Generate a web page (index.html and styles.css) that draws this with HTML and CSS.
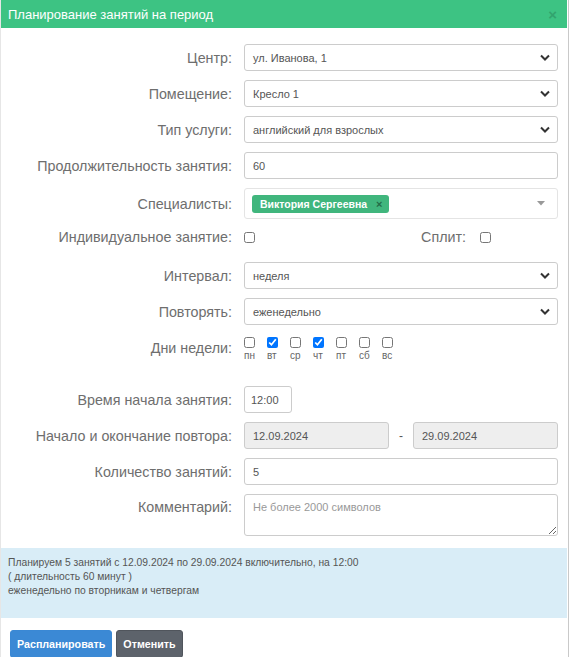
FILE: index.html
```html
<html>
<head>
	<title>Планирование занятий на период</title>
	<meta charset="utf-8">
	<link rel="stylesheet" href="styles.css">
</head>
<body>

<div class="modal">
	<div class="modal-header">
		<span>Планирование занятий на период</span>
		<span class="close">&times;</span>
	</div>

	<div class="modal-body">
		<div class="row">
			<label class="row-label">Центр:</label>
			<div class="select">
				<span>ул. Иванова, 1</span>
				<svg class="chevron" width="10" height="7" viewBox="0 0 10 7"><path d="M1 1.5 L5 5.5 L9 1.5" fill="none" stroke="#333" stroke-width="2"/></svg>
			</div>
		</div>
		<div class="row">
			<label class="row-label">Помещение:</label>
			<div class="select">
				<span>Кресло 1</span>
				<svg class="chevron" width="10" height="7" viewBox="0 0 10 7"><path d="M1 1.5 L5 5.5 L9 1.5" fill="none" stroke="#333" stroke-width="2"/></svg>
			</div>
		</div>
		<div class="row">
			<label class="row-label">Тип услуги:</label>
			<div class="select">
				<span>английский для взрослых</span>
				<svg class="chevron" width="10" height="7" viewBox="0 0 10 7"><path d="M1 1.5 L5 5.5 L9 1.5" fill="none" stroke="#333" stroke-width="2"/></svg>
			</div>
		</div>
		<div class="row">
			<label class="row-label">Продолжительность занятия:</label>
			<input class="input" type="text" value="60">
		</div>
		<div class="row">
			<label class="row-label">Специалисты:</label>
			<div class="multi">
				<span class="tag">Виктория Сергеевна <span class="tag-x">&times;</span></span>
				<svg width="8" height="5" viewBox="0 0 8 5"><path d="M0 0 L8 0 L4 4.5 Z" fill="#999"/></svg>
			</div>
		</div>
		<div class="row row-check">
			<label class="row-label">Индивидуальное занятие:</label>
			<div class="check-line">
				<input type="checkbox" class="cb">
				<span class="split">
					<span class="split-label">Сплит:</span>
					<input type="checkbox" class="cb">
				</span>
			</div>
		</div>
		<div class="row">
			<label class="row-label">Интервал:</label>
			<div class="select">
				<span>неделя</span>
				<svg class="chevron" width="10" height="7" viewBox="0 0 10 7"><path d="M1 1.5 L5 5.5 L9 1.5" fill="none" stroke="#333" stroke-width="2"/></svg>
			</div>
		</div>
		<div class="row">
			<label class="row-label">Повторять:</label>
			<div class="select">
				<span>еженедельно</span>
				<svg class="chevron" width="10" height="7" viewBox="0 0 10 7"><path d="M1 1.5 L5 5.5 L9 1.5" fill="none" stroke="#333" stroke-width="2"/></svg>
			</div>
		</div>
		<div class="row row-days">
			<label class="row-label">Дни недели:</label>
			<div class="days">
				<label class="day"><input type="checkbox" class="cb">пн</label>
				<label class="day"><input type="checkbox" class="cb" checked>вт</label>
				<label class="day"><input type="checkbox" class="cb">ср</label>
				<label class="day"><input type="checkbox" class="cb" checked>чт</label>
				<label class="day"><input type="checkbox" class="cb">пт</label>
				<label class="day"><input type="checkbox" class="cb">сб</label>
				<label class="day"><input type="checkbox" class="cb">вс</label>
			</div>
		</div>
		<div class="row">
			<label class="row-label">Время начала занятия:</label>
			<div><input class="input time" type="text" value="12:00"></div>
		</div>
		<div class="row">
			<label class="row-label">Начало и окончание повтора:</label>
			<div class="period">
				<input class="input" type="text" value="12.09.2024" disabled>
				<span class="dash">-</span>
				<input class="input" type="text" value="29.09.2024" disabled>
			</div>
		</div>
		<div class="row">
			<label class="row-label">Количество занятий:</label>
			<input class="input" type="text" value="5">
		</div>
		<div class="row row-comment">
			<label class="row-label">Комментарий:</label>
			<textarea class="input comment" placeholder="Не более 2000 символов"></textarea>
		</div>
	</div>

	<div class="summary">
		Планируем 5 занятий с 12.09.2024 по 29.09.2024 включительно, на 12:00<br>
		( длительность 60 минут )<br>
		еженедельно по вторникам и четвергам
	</div>

	<div class="modal-footer">
		<button class="btn btn-primary">Распланировать</button>
		<button class="btn btn-default">Отменить</button>
	</div>
</div>

</body>
</html>
```

FILE: styles.css
```css
body {
	margin: 0;
	font-family: "Liberation Sans", Arial, sans-serif;
	background: #fff;
}

.modal {
	width: 567px;
	min-height: 657px;
	border-left: 1px solid #e6e6e6;
	border-right: 1px solid #c9c9c9;
}

.modal-header {
	height: 28px;
	margin-right: 1px;
	padding: 0 10px 0 7px;
	background-color: #3dc383;
	color: #fff;
	font-size: 13px;
	display: flex;
	align-items: center;
	justify-content: space-between;
}

.close {
	color: #32a46e;
	font-size: 15px;
	font-weight: bold;
}

.modal-body {
	padding: 16px 10px 0 0;
}

.row {
	display: grid;
	grid-template-columns: 231px 1fr;
	column-gap: 12px;
	align-items: center;
	margin-bottom: 9px;
}

.row-label {
	text-align: right;
	font-size: 14.3px;
	color: #6e6e6e;
}

.select,
.input {
	box-sizing: border-box;
	height: 27px;
	border: 1px solid #ccc;
	border-radius: 3px;
	background: #fff;
	font-family: inherit;
	font-size: 11px;
	color: #555;
	padding: 0 8px;
}

.select {
	display: flex;
	align-items: center;
	justify-content: space-between;
}

.chevron {
	margin-right: -1px;
}

.input {
	width: 100%;
	outline: none;
}

.input:disabled {
	background: #eee;
	color: #555;
}

.multi {
	box-sizing: border-box;
	height: 31px;
	border: 1px solid #e4e4e4;
	border-radius: 3px;
	padding: 0 12px 0 7px;
	display: flex;
	align-items: center;
	justify-content: space-between;
}

.tag {
	background-color: #40b67d;
	color: #fff;
	font-size: 10.5px;
	font-weight: bold;
	border-radius: 3px;
	padding: 3px 6px 3px 8px;
	line-height: 12px;
}

.tag-x {
	color: #236b48;
	margin-left: 6px;
	font-size: 11px;
}

.cb {
	width: 11px;
	height: 11px;
	margin: 0;
}

.row-check {
	height: 18px;
	margin-bottom: 16px;
}

.check-line {
	display: flex;
	align-items: center;
	justify-content: space-between;
	padding-right: 67px;
}

.split {
	display: flex;
	align-items: center;
	gap: 14px;
}

.split-label {
	font-size: 14.3px;
	color: #6e6e6e;
}

.row-days {
	margin-bottom: 25px;
}

.days {
	display: flex;
	gap: 10px;
	padding-top: 3px;
}

.day {
	width: 13px;
	display: flex;
	flex-direction: column;
	align-items: flex-start;
	gap: 2px;
	font-size: 10px;
	color: #666;
}

.time {
	width: 48px;
	padding: 0 6px;
}

.period {
	display: grid;
	grid-template-columns: 1fr 24px 1fr;
	align-items: center;
}

.dash {
	text-align: center;
	font-size: 12px;
	color: #555;
}

.row-comment {
	align-items: start;
	margin-bottom: 12px;
}

.row-comment .row-label {
	padding-top: 5px;
}

.comment {
	height: 42px;
	padding-top: 6px;
	resize: vertical;
}

.comment::placeholder {
	color: #999;
}

.summary {
	margin-right: 1px;
	background-color: #d9edf7;
	color: #555;
	font-size: 10.3px;
	line-height: 14px;
	padding: 8px 7px 20px 7px;
}

.modal-footer {
	padding: 12px 9px;
	display: flex;
	gap: 4px;
}

.btn {
	height: 28px;
	border-radius: 3px;
	font-family: inherit;
	font-size: 10.7px;
	font-weight: bold;
	color: #fff;
	padding: 0 6px;
	cursor: pointer;
}

.btn-primary {
	background-color: #3b89d5;
	border: 1px solid #3a88d4;
}

.btn-default {
	background-color: #5d636b;
	border: 1px solid #50555c;
}
```
